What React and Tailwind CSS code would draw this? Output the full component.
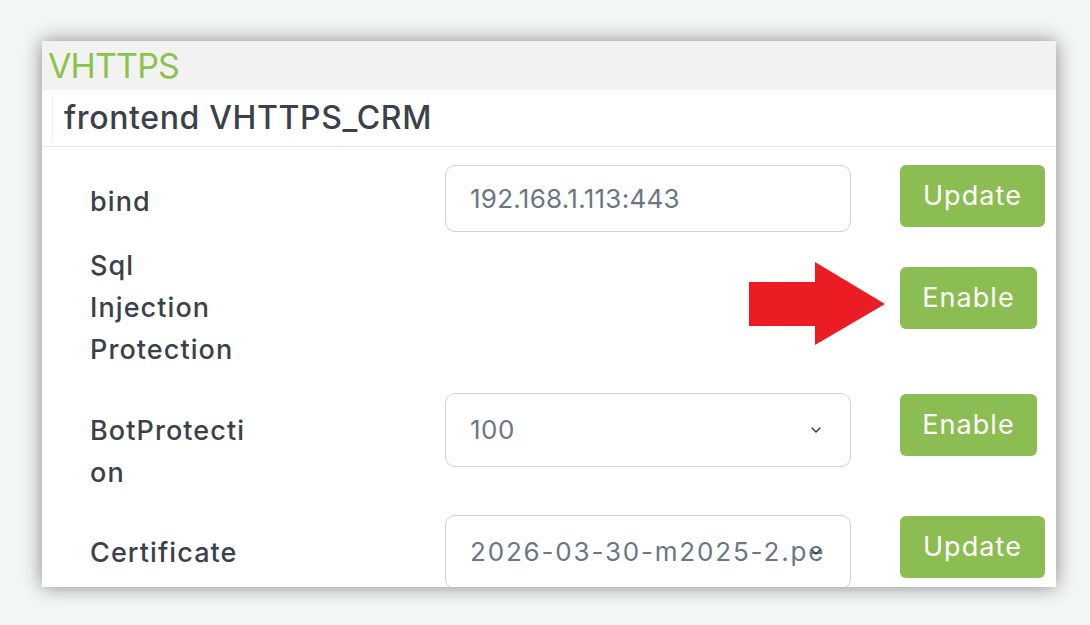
import React from 'react';
import { ChevronDown } from 'lucide-react';

const font = { fontFamily: 'Inter, "Open Sans", Arial, sans-serif' };

const GreenButton = ({ label, wide }) => (
  <button
    className={`h-[62px] ${wide ? 'w-[145px]' : 'w-[137px]'} rounded-[6px] bg-[#8bbd52] text-white text-[27px] tracking-[0.04em] font-normal`}
  >
    {label}
  </button>
);

const SelectBox = ({ value, spaced }) => (
  <div className="relative w-[406px] h-[74px] rounded-[10px] border border-[#cfd2d6] bg-white flex items-center">
    <div
      className={`pl-[24px] w-[381px] overflow-hidden whitespace-nowrap text-[26px] text-[#6b7685] ${spaced ? 'tracking-[0.07em]' : 'tracking-[0.02em]'}`}
    >
      {value}
    </div>
    <ChevronDown className="absolute right-[26px] top-1/2 -translate-y-1/2 w-[16px] h-[16px] text-[#333a40]" strokeWidth={2.2} />
  </div>
);

const Arrow = () => (
  <svg width="137" height="84" viewBox="0 0 137 84" className="absolute left-[659px] top-[17px]">
    <polygon points="0,20 66,20 66,0 136,42 66,83 66,64 0,64" fill="#ec1c24" />
  </svg>
);

export default function App() {
  return (
    <div className="w-[1090px] h-[625px] bg-[#f3f6f6] pt-[41px] pl-[42px]" style={font}>
      <div className="w-[1014px] h-[546px] bg-white overflow-hidden shadow-[0_0_18px_rgba(0,0,0,0.45)]">
        {/* header */}
        <div className="h-[49px] bg-[#f2f2f2] pl-[6px] flex items-center text-[34px] leading-none text-[#8bc34a] tracking-tight">
          VHTTPS
        </div>
        <div className="h-[57px] border-b border-[#e3e6ea] flex items-center pl-[10px]">
          <div className="h-[45px] border-l border-[#eceef0] pl-[11px] flex items-center text-[32px] text-[#3b4149] font-medium tracking-[0.02em]">
            frontend VHTTPS_CRM
          </div>
        </div>

        {/* rows */}
        <div className="pl-[48px] pt-[18px] text-[#3b4149] text-[27px] leading-[42px] font-medium tracking-[0.04em]">
          {/* bind */}
          <div className="flex items-start">
            <div className="w-[355px] mt-[16px]">bind</div>
            <div className="w-[406px] h-[67px] rounded-[10px] border border-[#cfd2d6] flex items-center pl-[24px] text-[26px] font-normal text-[#6b7685] tracking-[0.01em]">
              192.168.1.113:443
            </div>
            <div className="ml-[49px]">
              <GreenButton label="Update" wide />
            </div>
          </div>

          {/* sql injection */}
          <div className="relative flex items-start mt-[13px]">
            <div className="w-[355px]">
              <div>Sql</div>
              <div>Injection</div>
              <div>Protection</div>
            </div>
            <div className="w-[406px]" />
            <div className="ml-[49px] mt-[22px]">
              <GreenButton label="Enable" />
            </div>
            <Arrow />
          </div>

          {/* bot protection */}
          <div className="flex items-start mt-[22px]">
            <div className="w-[355px] mt-[17px]">
              <div>BotProtecti</div>
              <div>on</div>
            </div>
            <div className="font-normal">
              <SelectBox value="100" />
            </div>
            <div className="ml-[49px] mt-[1px]">
              <GreenButton label="Enable" />
            </div>
          </div>

          {/* certificate */}
          <div className="flex items-start mt-[21px]">
            <div className="w-[355px] mt-[17px]">Certificate</div>
            <div className="font-normal">
              <SelectBox value="2026-03-30-m2025-2.pem" spaced />
            </div>
            <div className="ml-[49px] mt-[1px]">
              <GreenButton label="Update" wide />
            </div>
          </div>
        </div>
      </div>
    </div>
  );
}
